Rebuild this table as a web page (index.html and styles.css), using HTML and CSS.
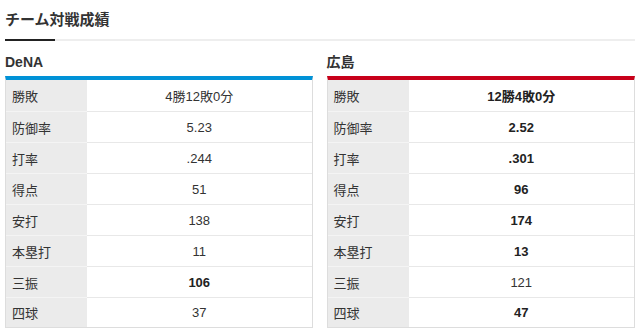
FILE: index.html
```html
<!DOCTYPE html>
<html lang="ja">
<head>
<meta charset="utf-8">
<link rel="stylesheet" href="styles.css">
</head>
<body>
<div class="page">
  <h2 class="title">チーム対戦成績</h2>
  <div class="teams">
    <section class="team">
      <h3 class="team-name">DeNA</h3>
      <table class="stats blue">
        <tr><th>勝敗</th><td>4勝12敗0分</td></tr>
        <tr><th>防御率</th><td>5.23</td></tr>
        <tr><th>打率</th><td>.244</td></tr>
        <tr><th>得点</th><td>51</td></tr>
        <tr><th>安打</th><td>138</td></tr>
        <tr><th>本塁打</th><td>11</td></tr>
        <tr><th>三振</th><td class="win">106</td></tr>
        <tr><th>四球</th><td>37</td></tr>
      </table>
    </section>
    <section class="team">
      <h3 class="team-name">広島</h3>
      <table class="stats red">
        <tr><th>勝敗</th><td class="win">12勝4敗0分</td></tr>
        <tr><th>防御率</th><td class="win">2.52</td></tr>
        <tr><th>打率</th><td class="win">.301</td></tr>
        <tr><th>得点</th><td class="win">96</td></tr>
        <tr><th>安打</th><td class="win">174</td></tr>
        <tr><th>本塁打</th><td class="win">13</td></tr>
        <tr><th>三振</th><td>121</td></tr>
        <tr><th>四球</th><td class="win">47</td></tr>
      </table>
    </section>
  </div>
</div>
</body>
</html>
```
FILE: styles.css
```css
* { box-sizing: border-box; }
html, body { margin: 0; padding: 0; background: #fff; }
body {
  font-family: "Liberation Sans", Arial, "Noto Sans CJK JP", sans-serif;
  color: #333;
}
.page {
  width: 630px;
  margin-left: 5px;
  padding-top: 10px;
}
.title {
  margin: 0;
  font-size: 15px;
  font-weight: bold;
  line-height: 20px;
  color: #333;
  padding-bottom: 9px;
  position: relative;
  border-bottom: 2px solid #eeeeee;
}
.title::after {
  content: "";
  position: absolute;
  left: 0;
  bottom: -2px;
  width: 50px;
  height: 2px;
  background: #222;
}
.teams {
  display: flex;
  gap: 14px;
  padding-top: 11px;
}
.team { width: 308px; }
.team + .team { width: 309px; }
.team-name {
  margin: 0;
  font-size: 14px;
  font-weight: bold;
  line-height: 20px;
  color: #333;
  padding-bottom: 4px;
}
.stats {
  width: 100%;
  border-collapse: separate;
  border-spacing: 0;
  border: 1px solid #dddddd;
  font-size: 13px;
}
.stats.blue { border-top: 4px solid #0092d7; }
.stats.red { border-top: 4px solid #c8001a; }
.stats th, .stats td {
  height: 31px;
  padding: 0;
  border-top: 1px solid #e8e8e8;
  font-weight: normal;
  vertical-align: middle;
}
.stats tr:first-child th, .stats tr:first-child td { border-top: none; height: 31px; }
.stats tr:last-child th, .stats tr:last-child td { height: 30px; }
.stats th {
  width: 81px;
  background: #ebebeb;
  text-align: left;
  padding-left: 6px;
  border-top-color: #f4f4f4;
  color: #333;
}
.stats td {
  text-align: center;
  color: #333;
}
.stats td.win { font-weight: bold; color: #222; }
```
